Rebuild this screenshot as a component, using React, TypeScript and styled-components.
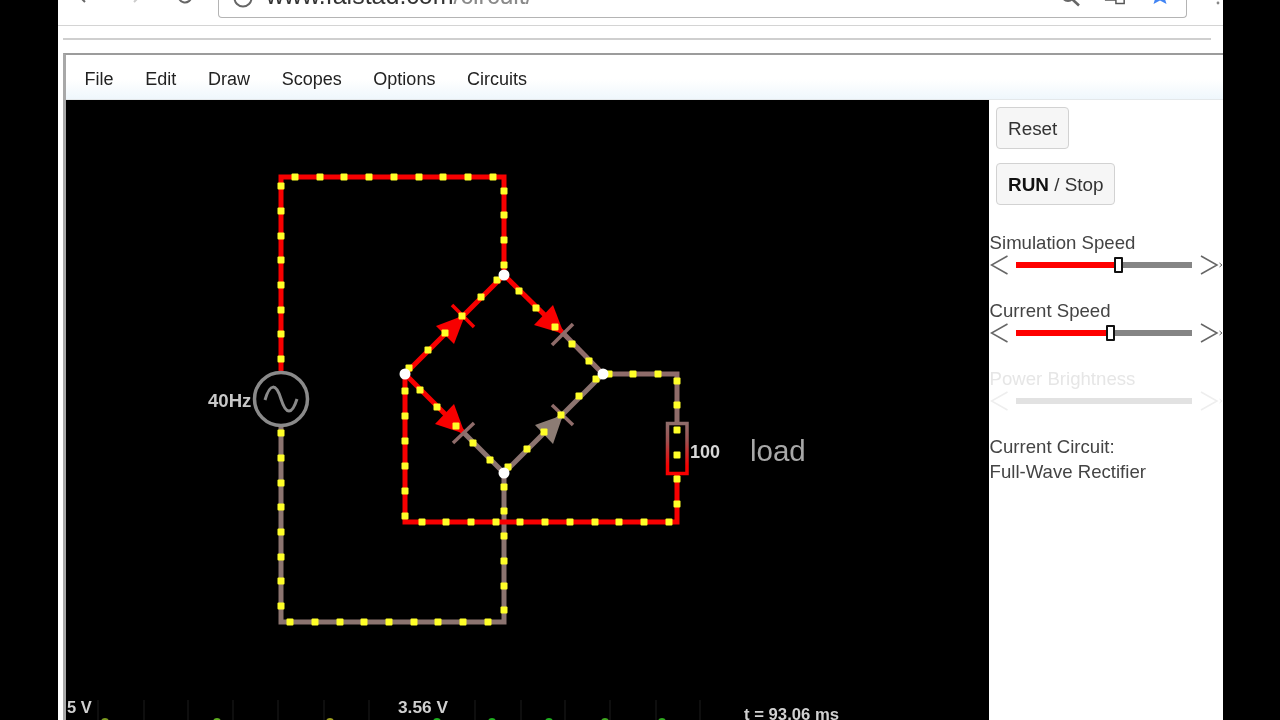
import React from "react";
import styled, { createGlobalStyle } from "styled-components";

const Global = createGlobalStyle`
  html, body { margin: 0; padding: 0; background: #000; height: 720px; overflow: hidden; }
  body { font-family: "Liberation Sans", Arial, sans-serif; }
`;

const Page = styled.div`
  width: 1165px;
  height: 720px;
  margin-left: 58px;
  background: #fff;
  overflow: hidden;
  display: flex;
  flex-direction: column;
  filter: blur(0.5px);
`;

const ChromeBar = styled.div`
  height: 26px;
  box-sizing: border-box;
  flex: none;
  display: flex;
  align-items: flex-start;
  background: #fff;
  border-bottom: 1px solid #d4d4d4;
  overflow: hidden;
`;

const NavIcon = styled.svg<{ $left: number }>`
  flex: none;
  width: 20px;
  height: 20px;
  margin-top: -14px;
  margin-left: ${(p) => p.$left}px;
`;

const UrlBox = styled.div`
  flex: none;
  width: 969px;
  height: 18px;
  margin-left: 23px;
  box-sizing: border-box;
  border: 1px solid #b4b4b4;
  border-top: none;
  border-radius: 0 0 4px 4px;
  display: flex;
  align-items: flex-start;
  overflow: hidden;
`;

const UrlIcon = styled.svg<{ $left: number }>`
  flex: none;
  width: 22px;
  height: 22px;
  margin-top: -13px;
  margin-left: ${(p) => p.$left}px;
`;

const UrlText = styled.div`
  flex: none;
  margin: -17px 0 0 12px;
  font-size: 25px;
  line-height: 24px;
  color: #333;
  white-space: nowrap;
  width: 773px;
`;

const UrlPath = styled.span`
  color: #8a8a8a;
`;

const Rule = styled.div`
  flex: none;
  height: 2px;
  margin: 12px 12px 0 5px;
  background: #cfcfcf;
`;

const Frame = styled.div`
  flex: 1;
  min-height: 0;
  margin: 13px 0 0 5px;
  border-top: 2px solid #9c9c9c;
  border-left: 3px solid #a8a8a8;
  display: flex;
  flex-direction: column;
`;

const MenuBar = styled.nav`
  flex: none;
  height: 45px;
  box-sizing: border-box;
  display: flex;
  align-items: center;
  gap: 31.7px;
  padding: 5px 0 0 18.5px;
  background: linear-gradient(#fff 0%, #fff 55%, #eff7fc 100%);
  border-bottom: 1px solid #e4e8ea;
`;

const MenuItem = styled.span`
  font-size: 18px;
  color: #222;
`;

const Work = styled.div`
  flex: 1;
  min-height: 0;
  display: flex;
`;

const Scene = styled.svg`
  flex: none;
  display: block;
  width: 923px;
  height: 620px;
  background: #000;
`;

const Side = styled.aside`
  flex: 1;
  min-width: 0;
  overflow: hidden;
  background: #fff;
  display: flex;
  flex-direction: column;
  align-items: flex-start;
  color: #333;
`;

const Btn = styled.button<{ $top: number }>`
  margin: ${(p) => p.$top}px 0 0 7px;
  height: 42px;
  padding: 1px 10.5px 0 11px;
  background: #f6f6f6;
  border: 1px solid #d2d2d2;
  border-radius: 4px;
  font-family: inherit;
  font-size: 18.9px;
  color: #333;
`;

const Bold = styled.b`
  color: #111;
`;

const SliderLabel = styled.div<{ $off?: boolean; $top: number }>`
  margin-top: ${(p) => p.$top}px;
  height: 24px;
  padding-left: 0.6px;
  line-height: 24px;
  font-size: 18.6px;
  white-space: nowrap;
  color: ${(p) => (p.$off ? "#e6e6e6" : "#444")};
`;

const SliderRow = styled.div`
  height: 20px;
  width: 234px;
  display: flex;
  align-items: center;
  flex: none;
`;

const Arrow = styled.svg`
  flex: none;
  width: 20px;
  height: 20px;
  margin-left: 1px;
`;

const EndArrow = styled.svg`
  flex: none;
  width: 22px;
  height: 20px;
  margin-left: 8px;
`;

const Track = styled.div<{ $off?: boolean }>`
  position: relative;
  flex: none;
  width: 176px;
  height: 6px;
  margin-left: 6px;
  background: ${(p) => (p.$off ? "#e2e2e2" : "#858585")};
`;

const Fill = styled.div`
  height: 100%;
  background: #f00;
`;

const Thumb = styled.div`
  position: absolute;
  top: -5px;
  width: 9px;
  height: 16px;
  margin-left: -4px;
  box-sizing: border-box;
  background: #fff;
  border: 2px solid #111;
  border-radius: 1px;
`;

const CircuitInfo = styled.div`
  margin-top: 24px;
  padding-left: 0.6px;
  font-size: 18.6px;
  line-height: 24.5px;
  color: #444;
  white-space: nowrap;
`;

const Label = styled.text<{ $size: number; $weight?: number; $fill: string }>`
  font-family: "Liberation Sans", Arial, sans-serif;
  font-size: ${(p) => p.$size}px;
  font-weight: ${(p) => p.$weight ?? 400};
  fill: ${(p) => p.$fill};
`;

const RED = "#f80000";
const BROWN = "#8c7470";
const PINK = "#8f6c6a";

type Seg = [string, number[]];
const wires: Seg[] = [
  [BROWN, [504, 473, 504, 622, 281, 622, 281, 426]],
  [PINK, [603, 374, 677, 374, 677, 423]],
  [PINK, [562, 332, 603, 374]],
  [BROWN, [463, 432, 504, 473]],
  [BROWN, [504, 473, 603, 374]],
  [RED, [281, 372, 281, 177, 504, 177, 504, 275]],
  [RED, [504, 275, 405, 374, 405, 522, 677, 522, 677, 475]],
  [RED, [504, 275, 562, 332]],
  [RED, [405, 374, 463, 432]],
];

const dots: number[][] = [
  [295, 177], [320, 177], [344, 177], [369, 177], [394, 177], [419, 177], [443, 177], [468, 177], [493, 177],
  [281, 186], [281, 211], [281, 236], [281, 260], [281, 285], [281, 310], [281, 334], [281, 359],
  [504, 191], [504, 215], [504, 240], [504, 265],
  [281, 433], [281, 458], [281, 483], [281, 507], [281, 532], [281, 557], [281, 581], [281, 606],
  [290, 622], [315, 622], [340, 622], [364, 622], [389, 622], [414, 622], [438, 622], [463, 622], [488, 622],
  [504, 487], [504, 511], [504, 536], [504, 561], [504, 586], [504, 610],
  [497, 280], [481, 297], [462, 316], [445, 333], [428, 350], [409, 368],
  [519, 291], [536, 308], [555, 327], [572, 344], [589, 361], [609, 374], [633, 374], [658, 374],
  [405, 391], [405, 416], [405, 441], [405, 466], [405, 491], [405, 516],
  [422, 522], [446, 522], [471, 522], [496, 522], [520, 522], [545, 522], [570, 522], [595, 522], [619, 522], [644, 522], [669, 522],
  [677, 504], [677, 479], [677, 455], [677, 430], [677, 405], [677, 381],
  [420, 390], [437, 407], [456, 426], [473, 443], [490, 460],
  [508, 467], [527, 449], [544, 432], [561, 415], [579, 396], [596, 379],
];

const nodes = [[504, 275], [405, 374], [603, 374], [504, 473]];
const ticks = [98, 144, 188, 233, 278, 324, 369, 475, 521, 565, 610, 656, 700];
const scopeDots = [[105, "#7c9a20"], [217, "#5fae20"], [330, "#a0a020"], [437, "#20b020"], [492, "#20b020"], [549, "#20b020"], [605, "#40a820"], [662, "#30aa20"]] as const;

const Chevron = ({ color }: { color: string }) => (
  <path d="M13 2 L6 9 L13 16" fill="none" stroke={color} strokeWidth="2" />
);

function Slider({ value, off }: { value?: number; off?: boolean }) {
  const c = off ? "#eeeeee" : "#666";
  return (
    <SliderRow>
      <Arrow viewBox="0 0 20 20">
        <path d="M17.5 1 L1.5 10 L17.5 19" fill="none" stroke={c} strokeWidth="1.5" />
      </Arrow>
      <Track $off={off}>
        {value !== undefined && <Fill style={{ width: value }} />}
        {value !== undefined && <Thumb style={{ left: value }} />}
      </Track>
      <EndArrow viewBox="0 0 22 20">
        <path d="M1 1 L17 10 L1 19" fill="none" stroke={c} strokeWidth="1.5" />
        <path d="M19.5 8 L22 10 L19.5 12" fill="none" stroke={c} strokeWidth="1" />
      </EndArrow>
    </SliderRow>
  );
}

function Circuit() {
  return (
    <Scene viewBox="66 100 923 620">
      {wires.map(([c, p], i) => (
        <polyline key={i} points={p.join(",")} fill="none" stroke={c} strokeWidth="5" strokeLinejoin="miter" />
      ))}

      <polygon points="465,315 436,326 454,344" fill={RED} />
      <line x1="452" y1="305" x2="474" y2="327" stroke={RED} strokeWidth="3.5" />
      <polygon points="564,334 553,305 534,325" fill={RED} />
      <line x1="552" y1="345" x2="573" y2="324" stroke={PINK} strokeWidth="3.5" />
      <polygon points="465,434 454,404 435,424" fill={RED} />
      <line x1="453" y1="443" x2="474" y2="423" stroke={PINK} strokeWidth="3.5" />
      <polygon points="563,415 535,425 553,444" fill="#8c7c74" />
      <line x1="552" y1="405" x2="573" y2="425" stroke={PINK} strokeWidth="3.5" />

      <defs>
        <linearGradient id="res" x1="0" y1="0" x2="0" y2="1">
          <stop offset="0" stopColor={PINK} />
          <stop offset="0.35" stopColor="#a05050" />
          <stop offset="0.85" stopColor={RED} />
        </linearGradient>
      </defs>
      <rect x="667.5" y="423.5" width="19.5" height="50" fill="none" stroke="url(#res)" strokeWidth="3.5" />

      <circle cx="281" cy="399" r="26.5" fill="none" stroke="#8a8a8a" strokeWidth="3.5" />
      <path d="M265 400 C270 383 276 383 281 399 C286 415 292 415 297 399" fill="none" stroke="#8a8a8a" strokeWidth="3" />

      {dots.map(([x, y], i) => (
        <rect key={i} x={x - 3.5} y={y - 3.5} width="7" height="7" rx="1" fill="#ffff28" />
      ))}
      {nodes.map(([x, y], i) => (
        <circle key={i} cx={x} cy={y} r="5.5" fill="#fff" />
      ))}

      <Label x="208" y="407" $size={18.6} $weight={700} $fill="#c8c8c8">40Hz</Label>
      <Label x="690" y="458" $size={18} $weight={700} $fill="#d8d8d8">100</Label>
      <Label x="750" y="461" $size={29.5} $fill="#a8a8a8">load</Label>

      {ticks.map((x) => (
        <line key={x} x1={x} y1="700" x2={x} y2="720" stroke="#1c1c1c" strokeWidth="1" />
      ))}
      {scopeDots.map(([x, c]) => (
        <circle key={x} cx={x} cy="722" r="4" fill={c} />
      ))}
      <Label x="67" y="713" $size={16.5} $weight={700} $fill="#d0d0d0">5 V</Label>
      <Label x="398" y="713" $size={17.3} $weight={700} $fill="#d0d0d0">3.56 V</Label>
      <Label x="744" y="720" $size={16.7} $weight={700} $fill="#d0d0d0">t = 93.06 ms</Label>
    </Scene>
  );
}

export default function App() {
  return (
    <>
      <Global />
      <Page>
        <ChromeBar>
          <NavIcon $left={14} viewBox="0 0 20 20"><Chevron color="#666" /></NavIcon>
          <NavIcon $left={35} viewBox="0 0 20 20" style={{ transform: "scaleX(-1)" }}><Chevron color="#ccc" /></NavIcon>
          <NavIcon $left={28} viewBox="0 0 20 20">
            <path d="M16.5 10 A6.5 6.5 0 1 1 14.5 5.3" fill="none" stroke="#666" strokeWidth="2" />
          </NavIcon>
          <UrlBox>
            <UrlIcon $left={13} viewBox="0 0 22 22">
              <circle cx="11" cy="11" r="8.5" fill="none" stroke="#666" strokeWidth="2" />
            </UrlIcon>
            <UrlText>www.falstad.com<UrlPath>/circuit/</UrlPath></UrlText>
            <UrlIcon $left={20} viewBox="0 0 22 22">
              <circle cx="9" cy="8" r="6" fill="none" stroke="#666" strokeWidth="2" />
              <path d="M13.5 12.5 L20 18.5" stroke="#666" strokeWidth="2.6" />
            </UrlIcon>
            <UrlIcon $left={23} viewBox="0 0 24 22">
              <rect x="1" y="4" width="14" height="10" fill="#555" />
              <rect x="13" y="6" width="9" height="11" fill="#fff" stroke="#555" strokeWidth="1.6" />
            </UrlIcon>
            <UrlIcon $left={23} viewBox="0 0 22 22">
              <path d="M11 -3 L14 5 L21 5.5 L15.5 10.5 L17.5 17 L11 13.5 L4.5 17 L6.5 10.5 L1 5.5 L8 5 Z" fill="#4285f4" />
            </UrlIcon>
          </UrlBox>
          <NavIcon $left={21} viewBox="0 0 20 20">
            <circle cx="10" cy="12" r="1.4" fill="#888" />
            <circle cx="10" cy="17" r="1.4" fill="#888" />
          </NavIcon>
        </ChromeBar>
        <Rule />
        <Frame>
          <MenuBar>
            {["File", "Edit", "Draw", "Scopes", "Options", "Circuits"].map((m) => (
              <MenuItem key={m}>{m}</MenuItem>
            ))}
          </MenuBar>
          <Work>
            <Circuit />
            <Side>
              <Btn $top={7}>Reset</Btn>
              <Btn $top={14}><Bold>RUN</Bold> / Stop</Btn>
              <SliderLabel $top={26}>Simulation Speed</SliderLabel>
              <Slider value={102} />
              <SliderLabel $top={24}>Current Speed</SliderLabel>
              <Slider value={94} />
              <SliderLabel $top={24} $off>Power Brightness</SliderLabel>
              <Slider off />
              <CircuitInfo>Current Circuit:<br />Full-Wave Rectifier</CircuitInfo>
            </Side>
          </Work>
        </Frame>
      </Page>
    </>
  );
}
